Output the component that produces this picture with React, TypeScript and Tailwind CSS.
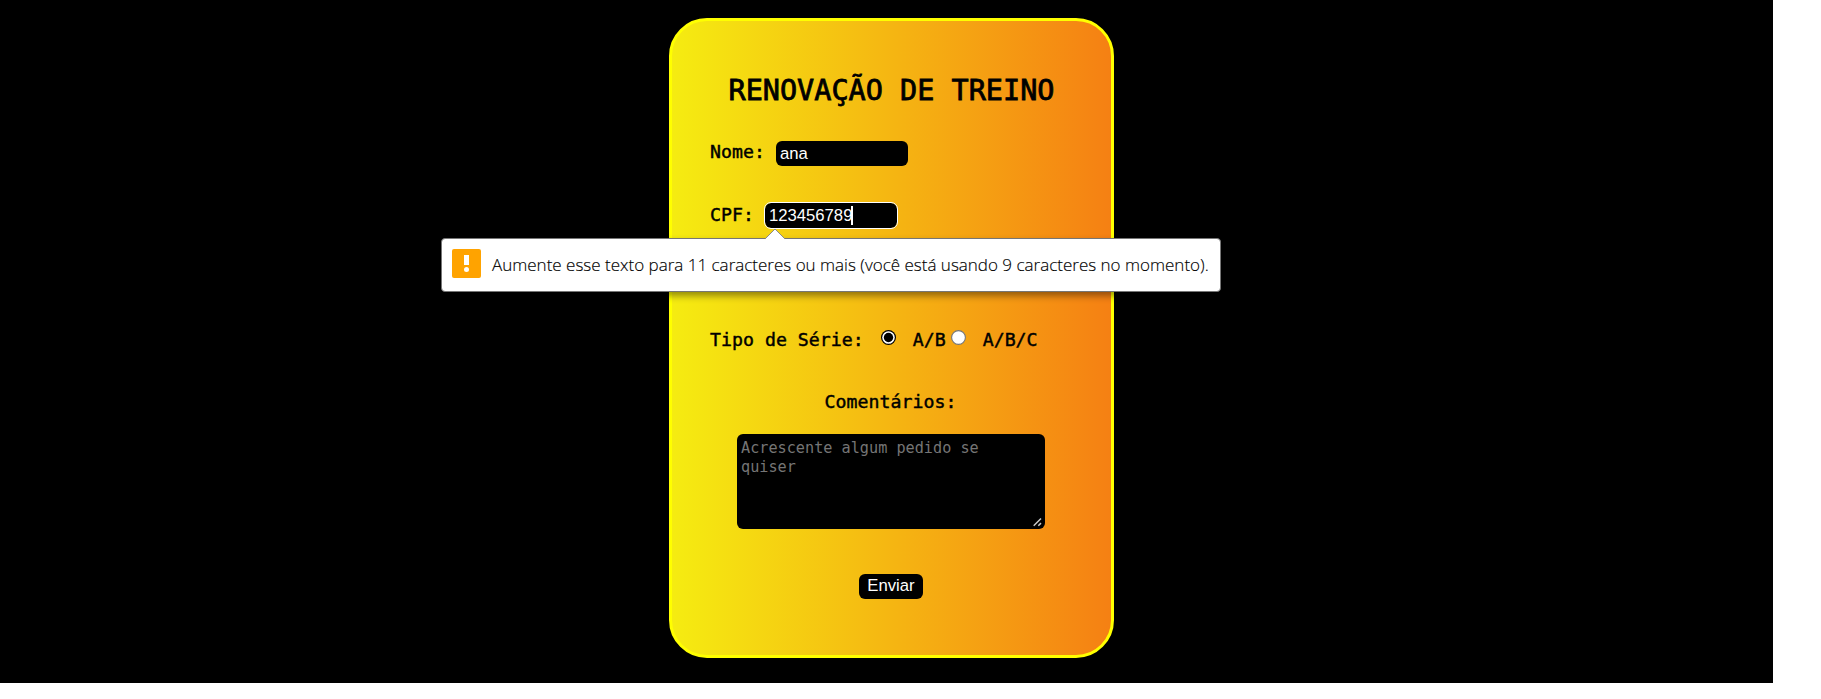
import React from "react";

const label =
  "font-['DejaVu_Sans_Mono',monospace] text-[18.2px] leading-6 tracking-[0.03px] whitespace-pre text-black [-webkit-text-stroke:0.45px_black]";
const field =
  "h-[25px] w-[132px] rounded-[6px] bg-black px-[4px] font-['Liberation_Sans',Arial,sans-serif] text-[16.7px] leading-[23px] text-white outline-none";

function Radio({ checked }: { checked?: boolean }) {
  return (
    <svg width="15" height="15" viewBox="0 0 15 15" role="radio" aria-checked={!!checked}>
      {checked ? (
        <>
          <circle cx="7.5" cy="7.5" r="7.5" fill="#000" />
          <circle cx="7.5" cy="7.5" r="6.3" fill="#fff" />
          <circle cx="7.5" cy="7.5" r="4.7" fill="#000" />
        </>
      ) : (
        <circle cx="7.5" cy="7.5" r="6.9" fill="#fff" stroke="#767676" strokeWidth="1.1" />
      )}
    </svg>
  );
}

function ValidationBubble() {
  return (
    <div className="absolute left-[441px] top-[238px] flex h-[54px] w-[780px] rounded-[4px] border border-[#767676] bg-white pl-[10px] pt-[10px] shadow-[0_4px_7px_rgba(0,0,0,0.4)]">
      <svg className="absolute left-[322px] top-[-11px]" width="22" height="12" viewBox="0 0 22 12">
        <path d="M1 11 11 1 21 11V12H1Z" fill="#fff" />
        <path d="M1 11 11 1 21 11" fill="none" stroke="#8a8a8a" />
      </svg>
      <svg className="shrink-0" width="29" height="29" viewBox="0 0 29 29">
        <rect width="29" height="29" rx="2" fill="#ffa300" />
        <path d="M12 6h5v10h-5z" fill="#fff" />
        <circle cx="14.5" cy="20.5" r="2.5" fill="#fff" />
      </svg>
      <span className="ml-[11px] mt-[4px] whitespace-nowrap font-['Open_Sans',sans-serif] text-[17px] font-light leading-6 text-black [-webkit-text-stroke:0.15px_black]">
        Aumente esse texto para 11 caracteres ou mais (você está usando 9 caracteres no momento).
      </span>
    </div>
  );
}

export default function App() {
  return (
    <div className="h-[699px] w-[1821px] overflow-hidden bg-white">
      <main className="relative h-[683px] w-[1773px] bg-black pl-[669px] pt-[18px]">
        <form className="flex h-[640px] w-[445px] flex-col rounded-[38px] border-[3px] border-[#ffff00] bg-[linear-gradient(to_right,#f5ec11,#f58013)] px-[38px]">
          <h1 className="mt-[50px] whitespace-nowrap text-center font-['DejaVu_Sans_Mono',monospace] text-[28.5px] leading-10 [-webkit-text-stroke:0.8px_black]">
            RENOVAÇÃO DE TREINO
          </h1>
          <div className="mt-[29px] flex h-[26px] items-start">
            <label className={label}>Nome: </label>
            <input className={field + " mt-[1px]"} defaultValue="ana" />
          </div>
          <div className="mt-[37px] flex h-[26px] items-start">
            <label className={label}>CPF: </label>
            <div className={field + " flex items-center outline-[1.5px]! outline-solid! outline-white!"}>
              <span>123456789</span>
              <span className="-ml-[1px] h-[19px] w-[1.5px] bg-white" />
            </div>
          </div>
          <div className="mt-[99px] flex h-6 items-center">
            <span className={label}>Tipo de Série:</span>
            <span className="-mt-[6px] ml-[17px]"><Radio checked /></span>
            <span className={label + " ml-[17px]"}>A/B</span>
            <span className="-mt-[6px] ml-[5px]"><Radio /></span>
            <span className={label + " ml-[17px]"}>A/B/C</span>
          </div>
          <label className={label + " mt-[38px] -translate-x-px text-center"}>Comentários:</label>
          <div className="relative ml-[27px] mt-[20px]">
            <textarea
              className="block h-[95px] w-[308px] resize-none rounded-[6px] bg-black px-[4px] py-[5px] font-['DejaVu_Sans_Mono',monospace] text-[15.2px] leading-[19px] text-white outline-none placeholder:text-[#757575]"
              placeholder="Acrescente algum pedido se quiser"
            />
            <svg className="absolute left-[296px] top-[83px]" width="9" height="10" viewBox="0 0 9 10">
              <path d="M.7 8.8 8 1.5M5.3 8.8 8 6.1" stroke="#c8c8c8" strokeWidth="1.5" />
            </svg>
          </div>
          <button type="button" className="mr-[1px] mt-[45px] h-[25px] w-[64px] self-center rounded-[6px] bg-black pb-[2px] font-['Liberation_Sans',Arial,sans-serif] text-[16.7px] leading-[23px] text-white">
            Enviar
          </button>
        </form>
        <ValidationBubble />
      </main>
    </div>
  );
}
